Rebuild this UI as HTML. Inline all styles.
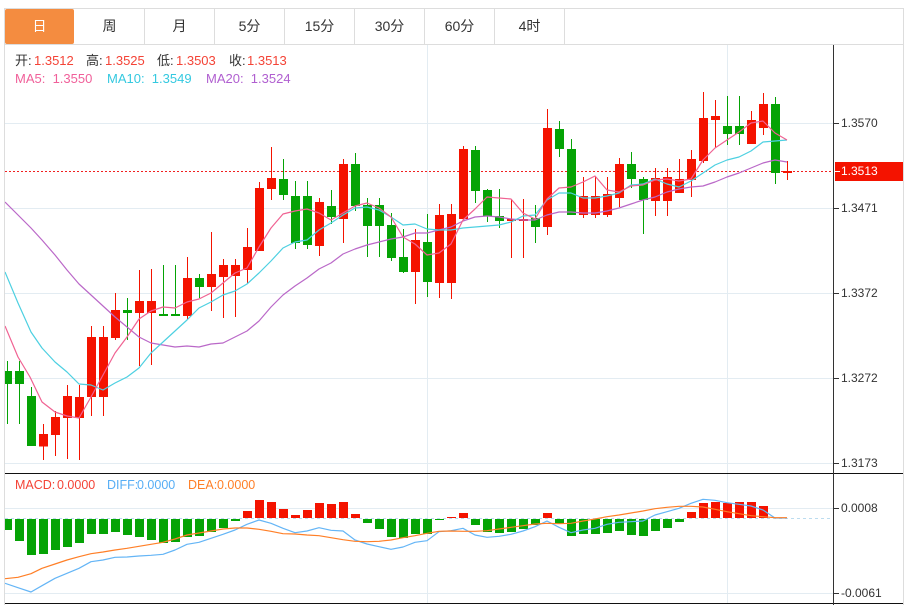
<!DOCTYPE html>
<html><head><meta charset="utf-8"><style>
html,body{margin:0;padding:0;background:#fff;width:913px;height:605px;overflow:hidden}
body{position:relative;font-family:"Liberation Sans","Noto Sans CJK SC",sans-serif}
.t{position:absolute;top:9px;height:35px;width:69px;line-height:35px;text-align:center;font-size:14px;color:#333;border-right:1px solid #ddd}
.l{position:absolute;font-size:13px;line-height:16px;white-space:nowrap}
.a{position:absolute;left:841px;font-size:12px;line-height:14px;color:#333}
</style></head><body>
<svg width="913" height="605" style="position:absolute;left:0;top:0">
<defs><clipPath id="c"><rect x="5" y="45" width="828" height="559"/></clipPath></defs>
<g fill="none" stroke="#e3ecf2" stroke-width="1" shape-rendering="crispEdges">
<path d="M5 123.5H833M5 208.5H833M5 293.5H833M5 378.5H833M5 463.5H833M5 508.5H833M5 593.5H833M427.5 45V603M727.5 45V603"/>
</g>
<g fill="none" stroke="#ddd" shape-rendering="crispEdges"><path d="M4.5 8V605M903.5 8V605M4 8.5H904M4 44.5H904"/></g>
<path d="M5 171.5H833" stroke="#f02020" stroke-dasharray="2 2" shape-rendering="crispEdges"/>
<g clip-path="url(#c)" shape-rendering="crispEdges">
<path stroke="#f41300" fill="none" d="M43.5 424V460M55.5 411V456M67.5 385V459M79.5 385V460M91.5 326V416M103.5 326V416M115.5 293V340M139.5 270V366M151.5 269V365M187.5 257V319M211.5 232V311M223.5 259V318M235.5 259V317M247.5 228V283M259.5 182V251M271.5 147V200M319.5 198V256M343.5 159V243M415.5 229V304M439.5 204V298M451.5 204V299M463.5 146V220M511.5 199V258M523.5 199V258M547.5 109V235M583.5 177V218M595.5 177V218M607.5 177V217M619.5 158V207M655.5 168V216M667.5 168V216M679.5 159V193M691.5 150V197M703.5 92V163M715.5 100V148M751.5 111V144M763.5 93V135M787.5 161V180"/>
<path stroke="#05a305" fill="none" d="M7.5 361V424M19.5 361V424M31.5 387V446M127.5 298V340M163.5 265V316M175.5 265V316M199.5 274V298M283.5 159V200M295.5 181V249M307.5 181V249M331.5 190V224M355.5 153V211M367.5 198V257M379.5 198V257M391.5 213V261M403.5 229V273M427.5 214V297M475.5 146V203M487.5 189V222M499.5 189V228M535.5 205V243M559.5 121V157M571.5 139V215M631.5 152V188M643.5 177V234M727.5 96V145M739.5 96V145M775.5 97V184"/>
<path fill="#f41300" d="M39 434h9v12.700h-9zM51 417h9v18h-9zM63 396h9v22h-9zM75 397h9v21h-9zM87 337h9v60h-9zM99 337h9v60h-9zM111 310h9v28h-9zM135 301h9v12h-9zM147 301h9v12h-9zM183 278h9v38h-9zM207 274h9v13h-9zM219 265h9v12h-9zM231 265h9v11h-9zM243 247h9v23h-9zM255 188h9v63h-9zM267 178h9v11h-9zM315 202h9v44h-9zM339 164h9v55h-9zM411 240h9v32h-9zM435 215h9v68h-9zM447 214h9v69h-9zM459 149h9v70h-9zM507 219h9v2h-9zM519 219h9v2h-9zM543 128h9v99h-9zM579 196h9v19h-9zM591 196h9v19h-9zM603 194h9v21h-9zM615 164h9v34h-9zM651 178h9v23h-9zM663 177h9v24h-9zM675 179h9v14h-9zM687 159h9v21h-9zM699 118h9v43h-9zM711 116h9v4h-9zM747 120h9v24h-9zM759 104h9v24h-9zM783 171h9v2h-9z"/>
<path fill="#05a305" d="M3 371h9v13h-9zM15 371h9v13h-9zM27 396h9v50h-9zM123 310h9v3h-9zM159 314h9v2h-9zM171 314h9v2h-9zM195 278h9v9h-9zM279 179h9v16h-9zM291 196h9v47h-9zM303 196h9v49h-9zM327 206h9v11h-9zM351 164h9v42h-9zM363 205h9v21h-9zM375 205h9v21h-9zM387 225h9v33h-9zM399 257h9v15h-9zM423 242h9v40h-9zM471 150h9v41h-9zM483 190h9v26h-9zM495 216h9v5h-9zM531 218h9v9h-9zM555 129h9v20h-9zM567 149h9v66h-9zM627 164h9v15h-9zM639 179h9v21h-9zM723 126h9v8h-9zM735 126h9v8h-9zM771 104h9v69h-9z"/>
</g>
<g clip-path="url(#c)" fill="none" stroke-width="1.2" stroke-linejoin="round">
<path stroke="#ba68c8" d="M5 202L18 215L31 228L42 240L55 255L67 270L79 284L91 295L103 306L115 317L127 327L139 337L151 343L163 345L175 347L187 346L199 347L211 344L223 343L235 337L247 331L259 321L271 307L283 295L295 286L307 278L319 269L331 263L343 254L355 249L367 245L379 242L391 239L403 237L415 233L427 233L439 230L451 227L463 221L475 217L487 216L499 217L511 219L523 220L535 220L547 215L559 212L571 212L583 213L595 213L607 211L619 208L631 204L643 200L655 197L667 192L679 189L691 187L703 186L715 182L727 177L739 173L751 168L763 163L775 160L787 162"/>
<path stroke="#4dd0e1" d="M5 272L18 303L31 332L42 348L55 362L67 372L79 384L91 385L103 390L115 383L127 377L139 368L151 353L163 342L175 331L187 320L199 308L211 302L223 295L235 291L247 284L259 273L271 261L283 248L295 242L307 240L319 230L331 223L343 215L355 208L367 207L379 210L391 217L403 225L415 224L427 229L439 230L451 230L463 228L475 227L487 226L499 225L511 222L523 216L535 215L547 200L559 193L571 193L583 198L595 198L607 196L619 193L631 185L643 184L655 179L667 184L679 187L691 181L703 173L715 165L727 160L739 157L751 151L763 142L775 141L787 140"/>
<path stroke="#f06292" d="M5 326L18 357L30 377L42 402L55 412L67 416L79 418L91 397L103 375L115 353L127 337L139 319L151 311L163 307L175 308L187 302L199 299L211 293L223 283L235 273L247 268L259 247L271 228L283 214L295 211L307 209L319 213L331 220L343 213L355 206L367 203L379 208L391 217L403 237L415 244L427 255L439 253L451 244L463 220L475 209L487 197L499 198L511 199L523 213L535 219L547 199L559 188L571 187L583 182L595 176L607 190L619 192L631 186L643 185L655 180L667 179L679 181L691 179L703 160L715 148L727 140L739 132L751 123L763 121L775 133L787 140"/>
</g>
<path d="M5 518.500H833" stroke="#bcdcef" stroke-dasharray="3 3" shape-rendering="crispEdges"/>
<g clip-path="url(#c)" shape-rendering="crispEdges">
<path fill="#05a305" d="M3 519h9v11h-9zM15 519h9v22h-9zM27 519h9v36h-9zM39 519h9v35h-9zM51 519h9v31h-9zM63 519h9v28h-9zM75 519h9v24h-9zM87 519h9v15h-9zM99 519h9v15h-9zM111 519h9v13h-9zM123 519h9v16h-9zM135 519h9v18h-9zM147 519h9v21h-9zM159 519h9v24h-9zM171 519h9v23h-9zM183 519h9v18h-9zM195 519h9v17h-9zM207 519h9v13h-9zM219 519h9v9h-9zM231 519h9v2h-9zM363 519h9v4h-9zM375 519h9v10h-9zM387 519h9v18h-9zM399 519h9v19h-9zM411 519h9v15h-9zM423 519h9v15h-9zM435 519h9v1h-9zM471 519h9v6h-9zM483 519h9v13h-9zM495 519h9v14h-9zM507 519h9v13h-9zM519 519h9v10h-9zM531 519h9v6h-9zM555 519h9v5h-9zM567 519h9v17h-9zM579 519h9v15h-9zM591 519h9v15h-9zM603 519h9v14h-9zM615 519h9v12h-9zM627 519h9v16h-9zM639 519h9v17h-9zM651 519h9v12h-9zM663 519h9v9h-9zM675 519h9v3h-9z"/>
<path fill="#f41300" d="M243 511h9v7h-9zM255 500h9v18h-9zM267 502h9v16h-9zM279 509h9v9h-9zM291 515h9v3h-9zM303 510h9v8h-9zM315 503h9v15h-9zM327 504h9v14h-9zM339 502h9v16h-9zM351 514h9v4h-9zM447 517h9v1h-9zM459 513h9v5h-9zM543 513h9v5h-9zM687 512h9v6h-9zM699 503h9v15h-9zM711 502h9v16h-9zM723 503h9v15h-9zM735 502h9v16h-9zM747 502h9v16h-9zM759 506h9v12h-9z"/>
</g>
<g clip-path="url(#c)" fill="none" stroke-width="1.2" stroke-linejoin="round">
<path stroke="#64b5f6" d="M5 583.300L18 587.700L31 592L42 585.700L55 578.300L67 573.300L79 568.300L91 561.700L103 560L115 557.300L127 557L139 556L151 555.300L163 554.300L175 550L187 544.300L199 542.300L211 538.300L223 534.300L235 530L247 524.300L259 520L271 523.300L283 528.300L295 532.700L307 531L319 527.700L331 530.300L343 531L355 540L367 544L379 546.700L391 549.300L403 547L415 542.300L427 540.700L439 531.700L451 530.700L463 528.300L475 535L487 537.300L499 536.300L511 534.300L523 531L535 526.700L547 521L559 527.300L571 532.700L583 530L595 528.300L607 524.300L619 522.300L631 521.700L643 521L655 515L667 511.700L679 508.300L691 503.300L703 499.300L715 500.300L727 502.700L739 504.300L751 506L763 510L775 518L787 518"/>
<path stroke="#ff7f27" d="M5 578.700L18 577.300L31 573.700L42 568.300L55 564L67 560L79 556.700L91 553.700L103 552L115 550L127 548.300L139 546.300L151 544.300L163 542.300L175 539L187 535L199 533L211 531L223 529L235 528L247 528L259 529.300L271 531.300L283 533.700L295 534L307 535L319 535.700L331 537.700L343 539.700L355 541.300L367 541.700L379 541.300L391 540L403 537.700L415 535.700L427 533.300L439 531.300L451 531L463 531.300L475 531.300L487 530.700L499 529L511 527.300L523 525.700L535 524L547 523.300L559 523.700L571 523.300L583 521L595 519L607 516.700L619 515L631 513L643 511L655 508.700L667 507.300L679 506.300L691 506.300L703 507L715 509.300L727 511.700L739 513.700L751 515.700L763 516.700L775 517.700L787 517.700"/>
</g>
<g shape-rendering="crispEdges" fill="none">
<path stroke="#111" d="M5 473.500H903M5 603.500H903"/>
<path stroke="#333" d="M833.500 45V605M834 123.500H839M834 208.500H839M834 293.500H839M834 378.500H839M834 463.500H839M834 508.500H839M834 593.500H839"/>
</g>
<rect x="835" y="162" width="68" height="19" fill="#f41300"/>
<rect x="835" y="171" width="5" height="1" fill="#fff"/>
<rect x="5" y="9" width="69" height="35" rx="2" fill="#f48c40"/>
</svg>
<div class="t" style="left:5px;color:#fff;border-right-color:transparent">日</div>
<div class="t" style="left:75px">周</div>
<div class="t" style="left:145px">月</div>
<div class="t" style="left:215px">5分</div>
<div class="t" style="left:285px">15分</div>
<div class="t" style="left:355px">30分</div>
<div class="t" style="left:425px">60分</div>
<div class="t" style="left:495px">4时</div>
<div class="l" style="left:15px;top:53px;color:#333">开:</div><div class="l" style="left:34px;top:53px;color:#f44336">1.3512</div>
<div class="l" style="left:86px;top:53px;color:#333">高:</div><div class="l" style="left:105px;top:53px;color:#f44336">1.3525</div>
<div class="l" style="left:157px;top:53px;color:#333">低:</div><div class="l" style="left:176px;top:53px;color:#f44336">1.3503</div>
<div class="l" style="left:229px;top:53px;color:#333">收:</div><div class="l" style="left:247px;top:53px;color:#f44336">1.3513</div>
<div class="l" style="left:15px;top:71px;color:#f0609a">MA5:&nbsp;&nbsp;1.3550</div>
<div class="l" style="left:107px;top:71px;color:#34c9e0">MA10:&nbsp;&nbsp;1.3549</div>
<div class="l" style="left:206px;top:71px;color:#b05fd0">MA20:&nbsp;&nbsp;1.3524</div>
<div class="l" style="left:15px;top:477px;color:#f44336;font-size:12.500px">MACD:</div><div class="l" style="left:57px;top:477px;color:#f44336;font-size:12.500px">0.0000</div>
<div class="l" style="left:107px;top:477px;color:#57aef5;font-size:12.500px">DIFF:</div><div class="l" style="left:137px;top:477px;color:#57aef5;font-size:12.500px">0.0000</div>
<div class="l" style="left:188px;top:477px;color:#ff7f27;font-size:12.500px">DEA:</div><div class="l" style="left:217px;top:477px;color:#ff7f27;font-size:12.500px">0.0000</div>
<div class="a" style="top:116px">1.3570</div>
<div class="a" style="top:201px">1.3471</div>
<div class="a" style="top:286px">1.3372</div>
<div class="a" style="top:371px">1.3272</div>
<div class="a" style="top:456px">1.3173</div>
<div class="a" style="top:164px;color:#fff">1.3513</div>
<div class="a" style="top:501px">0.0008</div>
<div class="a" style="top:586px">-0.0061</div>
</body></html>
